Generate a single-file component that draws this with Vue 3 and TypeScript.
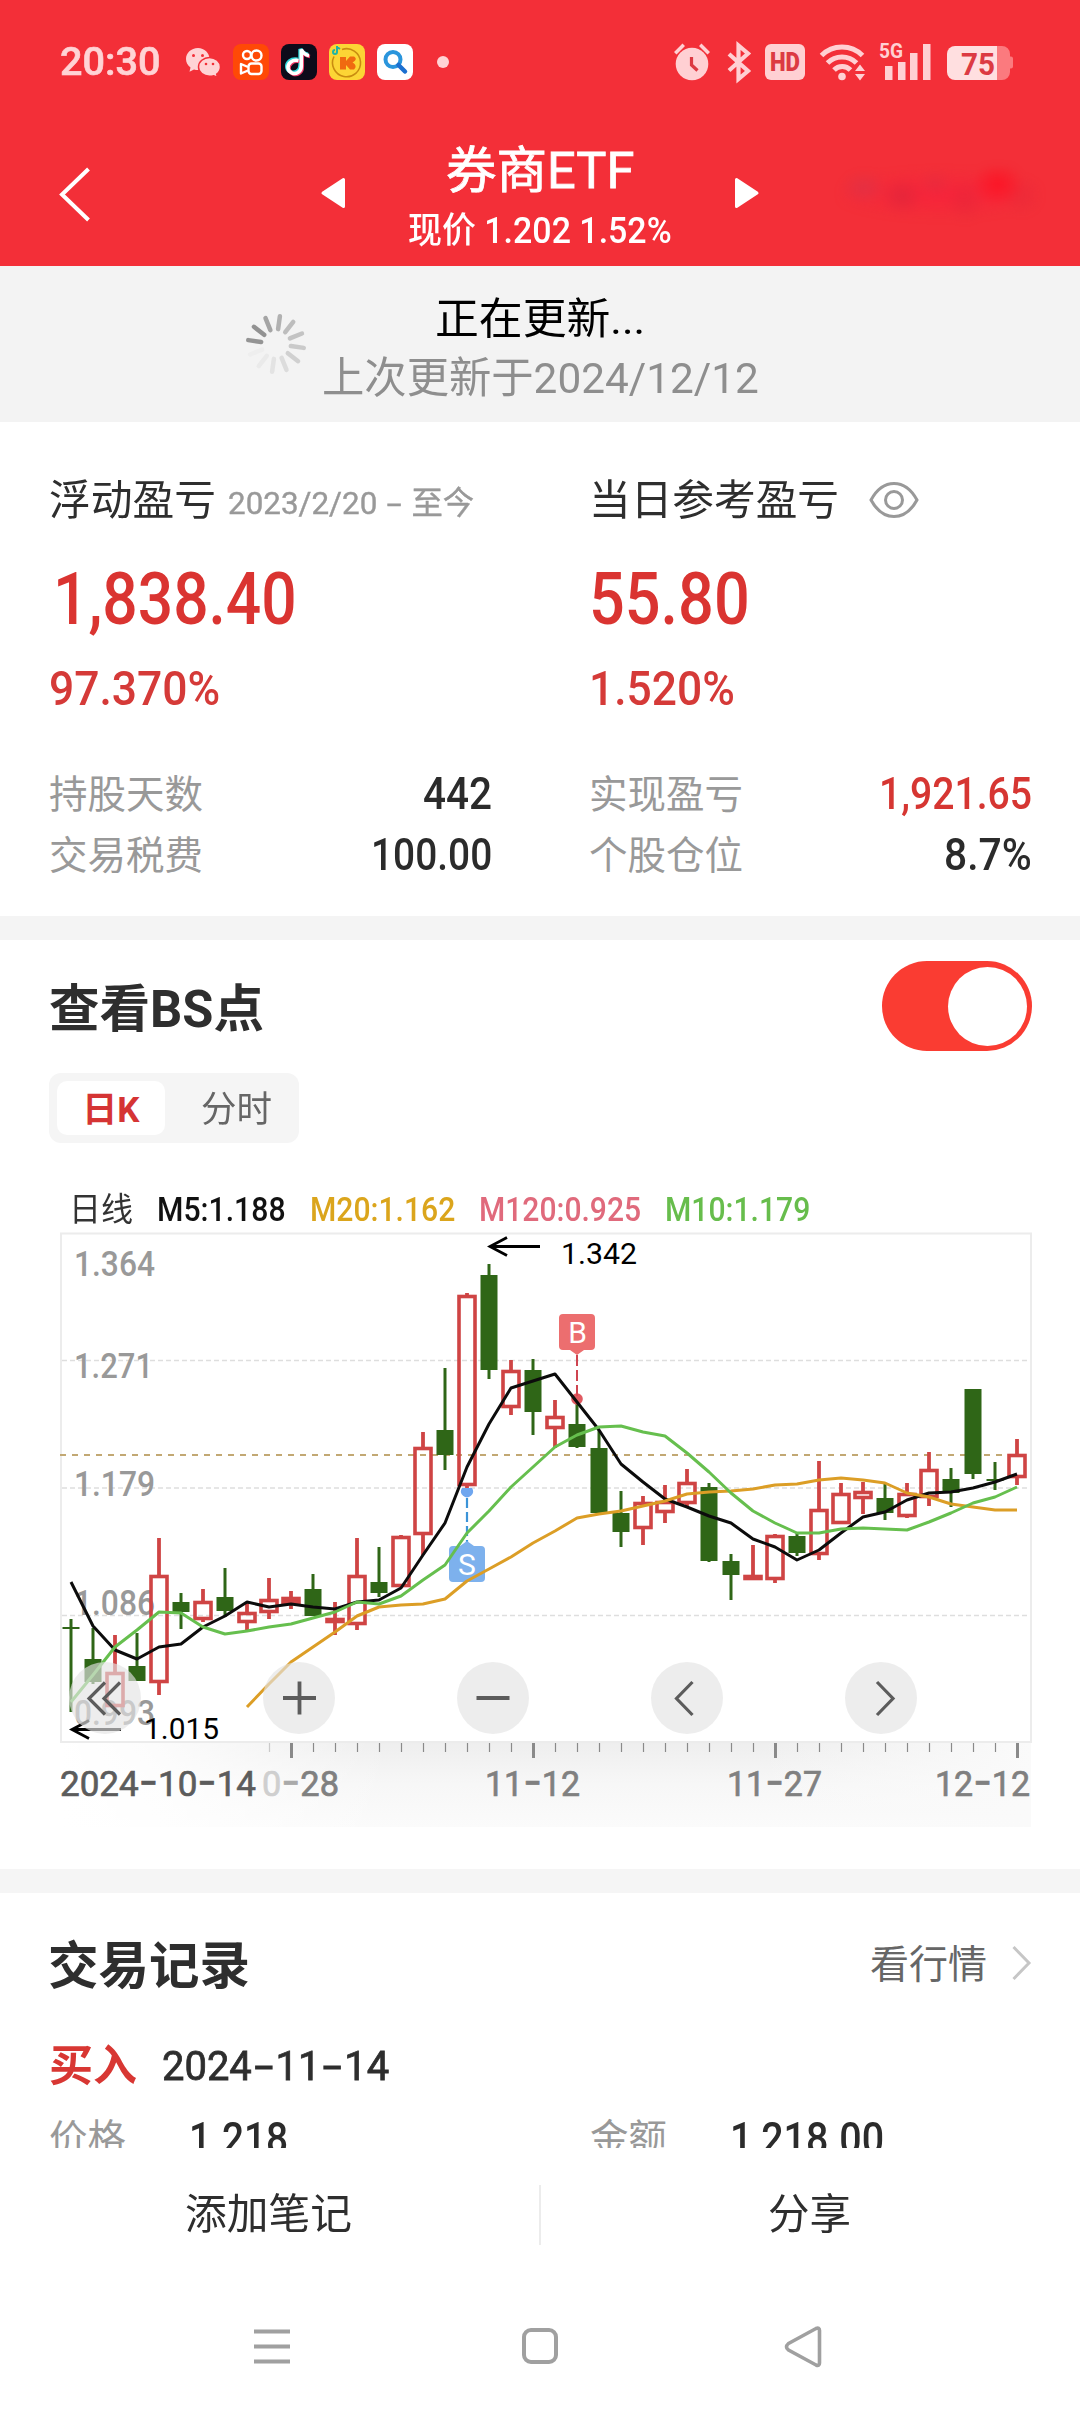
<script setup lang="ts">
type Candle = [up: number, high: number, low: number, top: number, bottom: number]

// Squeezes or stretches a text run horizontally so that it takes the given width.
const vFit = {
  mounted(el: HTMLElement, binding: { value: number }) {
    const natural = el.offsetWidth
    if (!natural) return
    el.style.transformOrigin = '0 50%'
    el.style.transform = `scaleX(${binding.value / natural})`
    el.style.marginRight = `${binding.value - natural}px`
  },
}

const STEP = 22
const cx = (i: number): number => 71 + i * STEP

const candles: Candle[] = [
  [0, 1619, 1712, 1627, 1629], [0, 1628, 1684, 1659, 1682], [1, 1635, 1707, 1672, 1707], [0, 1633, 1681, 1666, 1681],
  [1, 1538, 1695, 1575, 1683], [0, 1593, 1629, 1602, 1612], [1, 1589, 1622, 1601, 1620], [0, 1568, 1617, 1597, 1611],
  [1, 1603, 1630, 1612, 1623], [1, 1578, 1619, 1599, 1613], [1, 1591, 1609, 1597, 1604], [0, 1574, 1616, 1589, 1616],
  [1, 1602, 1635, 1618, 1623], [1, 1538, 1630, 1575, 1625], [0, 1547, 1597, 1582, 1593], [1, 1535, 1587, 1536, 1587],
  [1, 1432, 1555, 1447, 1535], [0, 1368, 1470, 1430, 1455], [1, 1293, 1490, 1295, 1486], [0, 1264, 1379, 1275, 1370],
  [1, 1360, 1415, 1370, 1408], [0, 1359, 1435, 1370, 1412], [1, 1400, 1448, 1416, 1429], [0, 1402, 1448, 1424, 1447],
  [0, 1430, 1513, 1448, 1513], [0, 1491, 1547, 1513, 1532], [1, 1496, 1545, 1502, 1529], [1, 1485, 1523, 1501, 1513],
  [1, 1469, 1508, 1482, 1504], [0, 1483, 1562, 1487, 1561], [0, 1554, 1600, 1561, 1575], [1, 1545, 1580, 1575, 1580],
  [1, 1534, 1583, 1535, 1580], [0, 1532, 1556, 1536, 1553], [1, 1461, 1560, 1509, 1555], [1, 1483, 1524, 1493, 1524],
  [1, 1482, 1514, 1491, 1499], [0, 1483, 1520, 1498, 1513], [1, 1483, 1518, 1493, 1517], [1, 1452, 1506, 1469, 1498],
  [0, 1468, 1507, 1479, 1493], [0, 1389, 1479, 1389, 1474], [0, 1462, 1490, 1479, 1481], [1, 1439, 1485, 1454, 1478],
]

const ma5 = [1582, 1626, 1650, 1659, 1647, 1644, 1627, 1616, 1602, 1607, 1604, 1607, 1609, 1602, 1600, 1588, 1555, 1523, 1467, 1424, 1388, 1381, 1374, 1402, 1430, 1464, 1482, 1499, 1507, 1516, 1523, 1539, 1547, 1560, 1550, 1533, 1517, 1512, 1500, 1493, 1492, 1488, 1482, 1474]
const ma10 = [1702, 1675, 1647, 1630, 1612, 1613, 1627, 1634, 1631, 1627, 1624, 1618, 1612, 1602, 1604, 1596, 1580, 1565, 1533, 1511, 1487, 1467, 1447, 1435, 1427, 1426, 1432, 1436, 1453, 1472, 1493, 1511, 1523, 1533, 1533, 1529, 1528, 1529, 1530, 1522, 1513, 1503, 1497, 1487]
const ma20 = [1707, 1684, 1662, 1647, 1632, 1616, 1607, 1605, 1604, 1599, 1581, 1569, 1557, 1543, 1531, 1518, 1514, 1511, 1506, 1501, 1494, 1492, 1491, 1489, 1485, 1484, 1480, 1478, 1480, 1483, 1493, 1497, 1504, 1507, 1510, 1510]

const line = (ys: number[], from = 0): string => ys.map((y, i) => `${cx(i + from)},${y}`).join(' ')

const priceLabels = [
  { text: '1.364', y: 1276 },
  { text: '1.271', y: 1378 },
  { text: '1.179', y: 1496 },
  { text: '1.086', y: 1615 },
  { text: '0.993', y: 1725 },
]

const ticks = Array.from({ length: 35 }, (_, k) => k + 9)
const major = (i: number): boolean => (i - 10) % 11 === 0

const dateLabels = [
  { a: '11', b: '12', x: 488 },
  { a: '11', b: '27', x: 730 },
  { a: '12', b: '12', x: 938 },
]

const spokes = [0.42, 0.34, 0.3, 0.26, 0.22, 0.14, 0.1, 0.05, 0.03, 0.6, 0.62, 0.5]
</script>

<template>
  <div class="screen">
    <header class="top">
      <div class="status">
        <span class="clock"><span v-fit="100">20:30</span></span>
        <svg class="tray" width="270" height="60" viewBox="180 32 270 60">
          <g fill="#ffd3d5">
            <path d="M198 48c-7 0-12 5-12 11 0 3.500 1.700 6.400 4.500 8.400l-1 4.400 4.500-2.300c1.300.4 2.600.5 4 .5 7 0 11.500-5 11.500-11s-5-11-11.500-11z" />
            <path d="M209.500 57.500c6 0 11 4.300 11 9.500 0 3-1.500 5.400-3.800 7.200l.8 3.300-3.700-1.800c-1.300.4-2.800.6-4.300.6-6 0-11-4-11-9.300s5-9.500 11-9.500z" stroke="#f32f38" stroke-width="1.500" />
          </g>
          <g fill="#f32f38"><circle cx="193.500" cy="55.500" r="1.500" /><circle cx="202.500" cy="55.500" r="1.500" /><circle cx="206" cy="64" r="1.300" /><circle cx="213" cy="64" r="1.300" /></g>
          <rect x="233" y="44" width="36" height="36" rx="8" fill="#ff4906" />
          <g fill="none" stroke="#fff" stroke-width="2.400">
            <circle cx="247" cy="55" r="4" /><circle cx="256.500" cy="55.500" r="5" />
            <rect x="248.500" y="63.500" width="13" height="10.500" rx="3" /><path d="M248 67l-7-3v9.500l7-3" stroke-linejoin="round" />
          </g>
          <rect x="281" y="44" width="36" height="36" rx="8" fill="#0d0b1a" />
          <path d="M298.500 60.500c-6.500-1.300-11 3-10.500 7.500.5 4.300 6 7 10 4.500 2.500-1.500 3.300-4 3.300-6.500V50c1.500 3 4 5 7.700 5.500" fill="none" stroke="#2fd8dc" stroke-width="4" transform="translate(-1 -1)" />
          <path d="M298.500 60.500c-6.500-1.300-11 3-10.500 7.500.5 4.300 6 7 10 4.500 2.500-1.500 3.300-4 3.300-6.500V50c1.500 3 4 5 7.700 5.500" fill="none" stroke="#ef3a68" stroke-width="3.500" transform="translate(1 1)" />
          <path d="M298.500 60.500c-6.500-1.300-11 3-10.500 7.500.5 4.300 6 7 10 4.500 2.500-1.500 3.300-4 3.300-6.500V49.500c1.500 3 4 5.500 7.700 6" fill="none" stroke="#fff" stroke-width="3.600" />
          <rect x="329" y="44" width="36" height="36" rx="8" fill="#fcd535" />
          <path d="M342 49.500a14 14 0 1 1-8 7" fill="none" stroke="#c98c10" stroke-width="1.600" />
          <path d="M340 57h6v4l4-4.500 4 0c3 2 2 4-1.500 6 3.500 2 4 4.500 1.500 7h-4l-4-4.500v4.500h-6z" fill="#f06a10" />
          <path d="M337 46v6a2 2 0 1 1-2-2M337 47l3 2" fill="none" stroke="#1fb5a5" stroke-width="2" />
          <rect x="377" y="44" width="36" height="36" rx="8" fill="#fff" />
          <circle cx="393" cy="59.500" r="7.500" fill="none" stroke="#2a95dc" stroke-width="4" />
          <path d="M398.500 65l6.500 6.500" stroke="#1c6fd0" stroke-width="4.500" stroke-linecap="round" />
          <circle cx="443" cy="62" r="6" fill="#ffd3d5" />
        </svg>
        <span class="grow"></span>
        <svg class="tray" width="346" height="60" viewBox="670 32 346 60">
          <g fill="#ffd0d3">
            <circle cx="692" cy="64" r="16.300" />
            <path d="M674 52l8.500-8.500 2.500 2.500-8.500 8.500zM710 52l-8.500-8.500-2.500 2.500 8.500 8.500z" />
            <rect x="765" y="44" width="40" height="36" rx="6" />
            <circle cx="842" cy="76.500" r="3.800" />
            <path d="M855 71l5-6.500 5 6.500zM855 74h10l-5 6.500z" />
            <rect x="885" y="66" width="7.500" height="14" /><rect x="898" y="62" width="7.500" height="18" /><rect x="910" y="53" width="7.500" height="27" /><rect x="923" y="44" width="7.500" height="36" />
          </g>
          <path d="M691.500 57v8l6 5.500" fill="none" stroke="#dc3a42" stroke-width="3.200" />
          <path d="M729 54l19 17-9.500 8V45.500l9.500 8-19 17" fill="none" stroke="#ffd0d3" stroke-width="4.200" />
          <g fill="none" stroke="#ffd0d3" stroke-width="5">
            <path d="M821.500 55.500a29 29 0 0 1 41 0" /><path d="M827.500 63a20.500 20.500 0 0 1 29 0" /><path d="M834 70a11.500 11.500 0 0 1 16.500 0" />
          </g>
          <text x="770" y="71" font-size="25" font-weight="900" textLength="30" lengthAdjust="spacingAndGlyphs" fill="#dc3a42">HD</text>
          <text x="879" y="58" font-size="20" font-weight="700" textLength="24" lengthAdjust="spacingAndGlyphs" fill="#ffd0d3">5G</text>
          <path d="M997 46h5a8 8 0 0 1 8 8v2.500h1a2 2 0 0 1 2 2v8a2 2 0 0 1-2 2h-1V72a8 8 0 0 1-8 8h-5z" fill="#fb7a7e" />
          <path d="M955 46h42v34h-42a8 8 0 0 1-8-8V54a8 8 0 0 1 8-8z" fill="#ffdfe0" />
          <text x="961" y="75" font-size="32" font-weight="700" textLength="34" lengthAdjust="spacingAndGlyphs" fill="#dc3a42">75</text>
        </svg>
      </div>
      <div class="nav">
        <svg class="back" width="34" height="60" viewBox="58 164 34 60"><path d="M88.500 169L62 194.500l26.500 25.500" fill="none" stroke="#fff" stroke-width="4" /></svg>
        <svg class="arrow" width="26" height="32" viewBox="320 177 26 32"><path d="M323 193l20.500-13.500v27z" fill="#fff" stroke="#fff" stroke-width="3" stroke-linejoin="round" /></svg>
        <div class="heading">
          <div class="name"><span v-fit="188">券商ETF</span></div>
          <div class="quote"><span v-fit="264">现价 1.202 1.52%</span></div>
        </div>
        <svg class="arrow" width="26" height="32" viewBox="734 177 26 32"><path d="M757 193l-20.500-13.500v27z" fill="#fff" stroke="#fff" stroke-width="3" stroke-linejoin="round" /></svg>
        <div class="smudge"></div>
      </div>
    </header>

    <section class="refresh">
      <svg width="60" height="62" viewBox="-30 -31 60 62">
        <line v-for="(o, i) in spokes" :key="i" x1="0" y1="-15" x2="0" y2="-28" :transform="`rotate(${i * 30 + 8})`" stroke="#555" :stroke-opacity="o" stroke-width="4.500" stroke-linecap="round" />
      </svg>
      <div class="refresh-text">
        <div class="now"><span v-fit="210">正在更新...</span></div>
        <div class="last"><span v-fit="437">上次更新于2024/12/12</span></div>
      </div>
    </section>

    <section class="summary">
      <div class="col">
        <div class="label">
          <span v-fit="167">浮动盈亏</span>
          <span class="range"><span v-fit="246">2023/2/20 <i class="dash">-</i> 至今</span></span>
        </div>
        <div class="big first"><span v-fit="244">1,838.40</span></div>
        <div class="pct"><span v-fit="171">97.370%</span></div>
        <div class="pair top-pair"><span class="key">持股天数</span><b><span v-fit="69">442</span></b></div>
        <div class="pair"><span class="key">交易税费</span><b><span v-fit="121">100.00</span></b></div>
      </div>
      <div class="col">
        <div class="label">
          <span v-fit="250">当日参考盈亏</span>
          <svg class="eye" width="50" height="38" viewBox="0 0 50 38" fill="none" stroke="#999" stroke-width="3">
            <path d="M2 19C8 8 16 2.500 25 2.500S42 8 48 19C42 30 34 35.500 25 35.500S8 30 2 19z" /><circle cx="25" cy="19" r="8.500" />
          </svg>
        </div>
        <div class="big"><span v-fit="161">55.80</span></div>
        <div class="pct"><span v-fit="146">1.520%</span></div>
        <div class="pair top-pair"><span class="key">实现盈亏</span><b class="red"><span v-fit="153">1,921.65</span></b></div>
        <div class="pair"><span class="key">个股仓位</span><b><span v-fit="88">8.7%</span></b></div>
      </div>
    </section>

    <section class="points">
      <div class="head">
        <h2><span v-fit="215">查看BS点</span></h2>
        <div class="toggle"><i></i></div>
      </div>
      <div class="tabs">
        <div class="tab on"><span v-fit="57">日K</span></div>
        <div class="tab"><span v-fit="71">分时</span></div>
      </div>
      <div class="legend">
        <span class="kind" v-fit="64">日线</span>
        <span v-fit="129">M5:1.188</span>
        <span class="m20" v-fit="145">M20:1.162</span>
        <span class="m120" v-fit="162">M120:0.925</span>
        <span class="m10" v-fit="145">M10:1.179</span>
      </div>
      <svg class="chart" width="1080" height="639" viewBox="0 1230 1080 639">
        <defs>
          <linearGradient id="stripV" x1="0" y1="0" x2="0" y2="1"><stop offset="0" stop-color="#eeeeee" /><stop offset="0.500" stop-color="#f7f7f7" /><stop offset="1" stop-color="#fbfbfb" /></linearGradient>
          <linearGradient id="stripL" x1="0" y1="0" x2="1" y2="0"><stop offset="0" stop-color="#fff" /><stop offset="0.250" stop-color="#fff" stop-opacity="0.850" /><stop offset="1" stop-color="#fff" stop-opacity="0" /></linearGradient>
          <linearGradient id="stripR" x1="0" y1="0" x2="1" y2="0"><stop offset="0" stop-color="#fafafa" stop-opacity="0" /><stop offset="1" stop-color="#fafafa" /></linearGradient>
        </defs>
        <rect x="61" y="1742" width="970" height="85" fill="url(#stripV)" />
        <rect x="61" y="1742" width="330" height="85" fill="url(#stripL)" />
        <rect x="760" y="1742" width="271" height="85" fill="url(#stripR)" />
        <rect x="61" y="1233.500" width="970" height="508.500" fill="none" stroke="#ececec" stroke-width="2" />
        <g stroke="#dedede" stroke-width="1.500" stroke-dasharray="5 3"><path d="M62 1360.500H1030M62 1488H1030M62 1615.500H1030" /></g>
        <path d="M60 1455H1030" stroke="#c2a873" stroke-width="2" stroke-dasharray="6 6" />

        <text v-for="p in priceLabels" :key="p.text" x="74" :y="p.y" font-size="35" font-weight="500" fill="#999" :textLength="p.text === '1.271' ? 79 : 81" lengthAdjust="spacingAndGlyphs">{{ p.text }}</text>

        <g v-for="(c, i) in candles" :key="i">
          <template v-if="c[0]">
            <line :x1="cx(i)" :x2="cx(i)" :y1="c[1]" :y2="c[3]" stroke="#cf4444" stroke-width="3.800" />
            <line :x1="cx(i)" :x2="cx(i)" :y1="c[4]" :y2="c[2]" stroke="#cf4444" stroke-width="3.800" />
            <rect :x="cx(i) - 8" :y="c[3] + 1.5" width="16" :height="Math.max(c[4] - c[3] - 3, 1)" :fill="c[4] - c[3] < 8 ? '#d93b3b' : 'none'" stroke="#cf4444" stroke-width="3.600" />
          </template>
          <template v-else>
            <line :x1="cx(i)" :x2="cx(i)" :y1="c[1]" :y2="c[2]" stroke="#2f6617" stroke-width="3" />
            <rect :x="cx(i) - 8.5" :y="c[3]" width="17" :height="c[4] - c[3]" fill="#2f6617" />
          </template>
        </g>

        <path d="M577 1355V1396" stroke="#cf4450" stroke-width="2" stroke-dasharray="11 4" />
        <circle cx="577" cy="1399" r="5.800" fill="#dd4850" fill-opacity="0.900" />
        <path d="M563 1314h28a4 4 0 0 1 4 4v28a4 4 0 0 1-4 4h-7l-7 5-7-5h-7a4 4 0 0 1-4-4v-28a4 4 0 0 1 4-4z" fill="#ec6e6f" />
        <text x="577.500" y="1343" font-size="30" text-anchor="middle" fill="#fff">B</text>
        <path d="M467 1498V1542" stroke="#3b94d8" stroke-width="2.200" stroke-dasharray="10 4" />
        <path d="M462 1488a6 6 0 1 0 10 0z" fill="#6fa6ef" />
        <path d="M453 1546h7l7-5 7 5h7a4 4 0 0 1 4 4v28a4 4 0 0 1-4 4h-28a4 4 0 0 1-4-4v-28a4 4 0 0 1 4-4z" fill="#7db1ed" />
        <text x="467" y="1575" font-size="30" text-anchor="middle" fill="#fff">S</text>

        <g fill="none" stroke-width="3" stroke-linejoin="round">
          <polyline :points="line(ma5)" stroke="#0c0c0c" />
          <polyline :points="line(ma20, 8)" stroke="#dc9e26" />
          <polyline :points="line(ma10)" stroke="#66bf4e" />
        </g>

        <g fill="none" stroke="#000" stroke-width="2.800">
          <path d="M540 1246.500H490M507 1237.500L490 1246.500l17 9" />
          <path d="M121 1729.500H72M89 1720.500L72 1729.500l17 9" />
        </g>
        <text x="561" y="1264" font-size="30" textLength="76" lengthAdjust="spacingAndGlyphs" fill="#000">1.342</text>
        <text x="144" y="1739" font-size="30" textLength="75" lengthAdjust="spacingAndGlyphs" fill="#000">1.015</text>

        <g stroke="#8a8a8a">
          <template v-for="i in ticks" :key="i">
            <line :x1="cx(i) + 0.5" :x2="cx(i) + 0.5" y1="1743" :y2="major(i) ? 1758 : 1752" :stroke-width="major(i) ? 3 : 1.2" :stroke-opacity="i < 10 ? 0.4 : 1" />
          </template>
        </g>

        <g class="dates" font-size="35" fill="#808080" stroke="#808080">
          <text x="60" y="1796" fill="#5c5c5c" stroke="#5c5c5c" textLength="196" lengthAdjust="spacingAndGlyphs">2024<tspan class="hy">-</tspan>10<tspan class="hy">-</tspan>14</text>
          <text x="262" y="1796" textLength="77" lengthAdjust="spacingAndGlyphs"><tspan fill="#cfcfcf" stroke="#cfcfcf">0</tspan><tspan class="hy" fill="#aaa" stroke="#aaa">-</tspan>28</text>
          <text v-for="d in dateLabels" :key="d.x" :x="d.x - 3" y="1796" textLength="95" lengthAdjust="spacingAndGlyphs">{{ d.a }}<tspan class="hy">-</tspan>{{ d.b }}</text>
        </g>

        <g fill="#e3e3e3" fill-opacity="0.650">
          <circle v-for="x in [105, 299, 493, 687, 881]" :key="x" :cx="x" cy="1698" r="36" />
        </g>
        <g fill="none" stroke="#5c5c5c" stroke-width="3.800">
          <path d="M105 1682.500L89 1698.500l16 16M120 1682.500L104 1698.500l16 16" stroke-width="3.200" />
          <path d="M283 1698h33M299.500 1681.500v33" />
          <path d="M476.500 1698h33" />
          <path d="M692.500 1682L676.500 1698.500l16 16.500" stroke-width="3.200" />
          <path d="M877 1682l16 16.500-16 16.500" stroke-width="3.200" />
        </g>
      </svg>
    </section>

    <section class="records">
      <div class="head">
        <h2><span v-fit="202">交易记录</span></h2>
        <div class="more"><span v-fit="117">看行情</span>
          <svg width="22" height="38" viewBox="0 0 22 38"><path d="M3.500 3L19 19 3.500 35" fill="none" stroke="#c6c6c6" stroke-width="3" /></svg>
        </div>
      </div>
      <div class="deal"><strong><span v-fit="88">买入</span></strong><span class="date" v-fit="227">2024<i class="dash">-</i>11<i class="dash">-</i>14</span></div>
      <div class="detail">
        <div class="cell"><span class="key">价格</span><b><span v-fit="99">1.218</span></b></div>
        <div class="cell"><span class="key">金额</span><b><span v-fit="154">1,218.00</span></b></div>
      </div>
    </section>

    <footer class="actions">
      <div><span v-fit="167">添加笔记</span></div>
      <i></i>
      <div><span v-fit="83">分享</span></div>
    </footer>
    <nav class="system">
      <svg width="1080" height="130" viewBox="0 2282 1080 130" fill="none" stroke="#a0a0a0" stroke-width="4">
        <path d="M254 2331.500h36M254 2346.500h36M254 2361.500h36" />
        <rect x="524" y="2330" width="32" height="32" rx="7" />
        <path d="M788.500 2343.500L816 2328.500q3.500-1.500 3.500 2V2363q0 3.500-3.500 2L788.500 2350q-4-3 0-6.500z" stroke-width="3.600" />
      </svg>
    </nav>
  </div>
</template>

<style>
body { margin: 0; background: #fff; }
</style>

<style scoped>
.screen { width: 1080px; height: 2412px; overflow: hidden; display: flex; flex-direction: column; background: #fff; color: #2e2e2e; font-family: Roboto, "Noto Sans CJK SC", sans-serif; }
.screen > * { flex: none; }
span { white-space: nowrap; }
[class] > span, b > span, strong > span, h2 > span, .legend > span, .actions span { display: inline-block; }
svg { display: block; flex: none; }
h2 { margin: 0; font-weight: 700; }
.grow { flex: 1; }

.top { height: 266px; background: #f32f38; color: #fff; display: flex; flex-direction: column; }
.status { display: flex; align-items: center; height: 60px; margin-top: 32px; padding: 0 64px 0 60px; }
.clock { width: 120px; font-size: 38px; font-weight: 500; color: #ffd3d5; line-height: 62px; -webkit-text-stroke: .6px #ffd3d5; }
.nav { display: flex; align-items: flex-start; height: 120px; box-sizing: border-box; margin: 42px 40px 0 58px; padding-top: 12px; }
.nav .arrow { margin-top: 31px; }
.nav .back { margin-top: 18px; margin-right: 228px; }
.heading { width: 388px; display: flex; flex-direction: column; align-items: center; }
.name { height: 50px; line-height: 50px; font-size: 50px; -webkit-text-stroke: .8px #fff; }
.quote { height: 40px; line-height: 40px; font-size: 36px; font-weight: 500; margin-top: 15px; }
.smudge { width: 200px; height: 56px; margin: 20px 0 0 80px; filter: blur(3px); background: radial-gradient(24px 18px at 24px 22px, rgba(200, 55, 85, .35), transparent), radial-gradient(22px 20px at 62px 30px, rgba(205, 35, 60, .4), transparent), radial-gradient(20px 16px at 95px 18px, rgba(205, 50, 70, .25), transparent), radial-gradient(20px 24px at 125px 34px, rgba(215, 35, 55, .3), transparent), radial-gradient(26px 22px at 158px 18px, rgba(255, 12, 30, .7), transparent), radial-gradient(20px 20px at 182px 30px, rgba(225, 40, 55, .35), transparent), radial-gradient(110px 26px at 100px 28px, rgba(250, 28, 60, .6), transparent); }

.refresh { height: 156px; background: #f3f3f3; display: flex; }
.refresh svg { margin: 47px 0 0 246px; }
.refresh-text { width: 470px; display: flex; flex-direction: column; align-items: center; margin: 24px 0 0 -1px; }
.now { height: 60px; line-height: 58px; font-size: 43px; color: #000; }
.last { height: 60px; line-height: 56px; font-size: 43px; color: #8e8e8e; }

.summary { height: 494px; box-sizing: border-box; padding: 49px 49px 0; display: grid; grid-template-columns: 442px 442px; justify-content: space-between; align-content: start; }
.label { height: 60px; display: flex; align-items: center; font-size: 42px; line-height: 62px; }
.range { margin-left: 12px; font-size: 32px; color: #999; padding-top: 4px; -webkit-text-stroke: .4px #999; }
.eye { margin-left: 30px; margin-top: -2px; }
.big { height: 80px; line-height: 83px; margin-top: 27px; font-size: 72px; font-weight: 500; color: #da3431; }
.big.first { margin-left: 4px; }
.pct { height: 50px; line-height: 50px; margin-top: 26px; font-size: 48px; font-weight: 500; color: #d53a38; }
.pair { height: 61px; line-height: 61px; display: flex; justify-content: space-between; }
.pair b { margin-right: -1px; }
.top-pair { margin-top: 50px; }
.key { font-size: 38.500px; color: #999; }
b { font-size: 44px; font-weight: 500; color: #2b2b2b; }
.red { color: #d63632; }

.points { border-top: 24px solid #f4f4f4; padding-top: 21px; height: 908px; }
.points .head { height: 90px; padding: 0 48px 0 49px; display: flex; justify-content: space-between; align-items: center; }
.head h2 { font-size: 51px; line-height: 60px; }
.points h2 { margin-top: 7px; }
.toggle { width: 150px; height: 90px; border-radius: 45px; background: #fa3c32; display: flex; align-items: center; justify-content: flex-end; }
.toggle i { width: 79px; height: 79px; border-radius: 50%; background: #fff; margin-right: 5px; }
.tabs { width: 250px; height: 70px; margin: 22px 0 0 49px; padding: 8px; box-sizing: border-box; background: #f5f5f5; border-radius: 12px; display: flex; }
.tab { flex: 1; line-height: 59px; text-align: center; font-size: 36px; color: #666; display: flex; justify-content: center; padding-left: 17px; }
.tab.on { flex: none; width: 108px; height: 54px; padding: 0; background: #fff; border-radius: 10px; color: #d53434; font-weight: 700; font-size: 35px; }
.legend { height: 40px; line-height: 40px; margin-top: 47px; padding-left: 69px; display: flex; gap: 24px; font-size: 33px; font-weight: 500; color: #111; }
.kind { color: #333; font-weight: 400; }
.m20 { color: #dba51c; }
.m120 { color: #e06a7c; }
.m10 { color: #67bd4c; }
.chart text { font-family: Roboto, sans-serif; }
.dates { stroke-width: .7px; }
.hy { font-family: Inter, sans-serif; font-size: 42px; font-weight: 400; }
.tray text { font-family: Roboto, sans-serif; }

.records { height: 213px; overflow: hidden; border-top: 24px solid #f5f5f5; padding: 42px 49px 0; }
.records .head { height: 60px; display: flex; justify-content: space-between; align-items: center; }
.records h2 { font-size: 51px; margin-top: 4px; margin-left: -1px; }
.more { display: flex; align-items: center; font-size: 39px; line-height: 60px; color: #666; }
.more svg { margin-left: 23px; margin-right: -1px; margin-top: -4px; }
.deal { height: 60px; line-height: 62px; margin-top: 40px; display: flex; }
.deal strong { font-size: 43px; color: #d83733; width: 113px; }
.date { display: inline-block; font-size: 41px; -webkit-text-stroke: .8px #2e2e2e; }
.dash { display: inline-block; font-style: normal; transform: scaleX(1.7); margin: 0 .16em; }
.detail { margin-top: 22px; line-height: 44px; display: flex; }
.cell { flex: none; width: 541px; display: flex; }
.cell .key { width: 140px; }

.actions { height: 134px; display: flex; align-items: center; font-size: 42px; line-height: 62px; }
.actions div { flex: 1; display: flex; justify-content: center; margin-left: -2px; }
.actions i { width: 2px; height: 60px; background: #ececec; }
.system { height: 130px; }
</style>
